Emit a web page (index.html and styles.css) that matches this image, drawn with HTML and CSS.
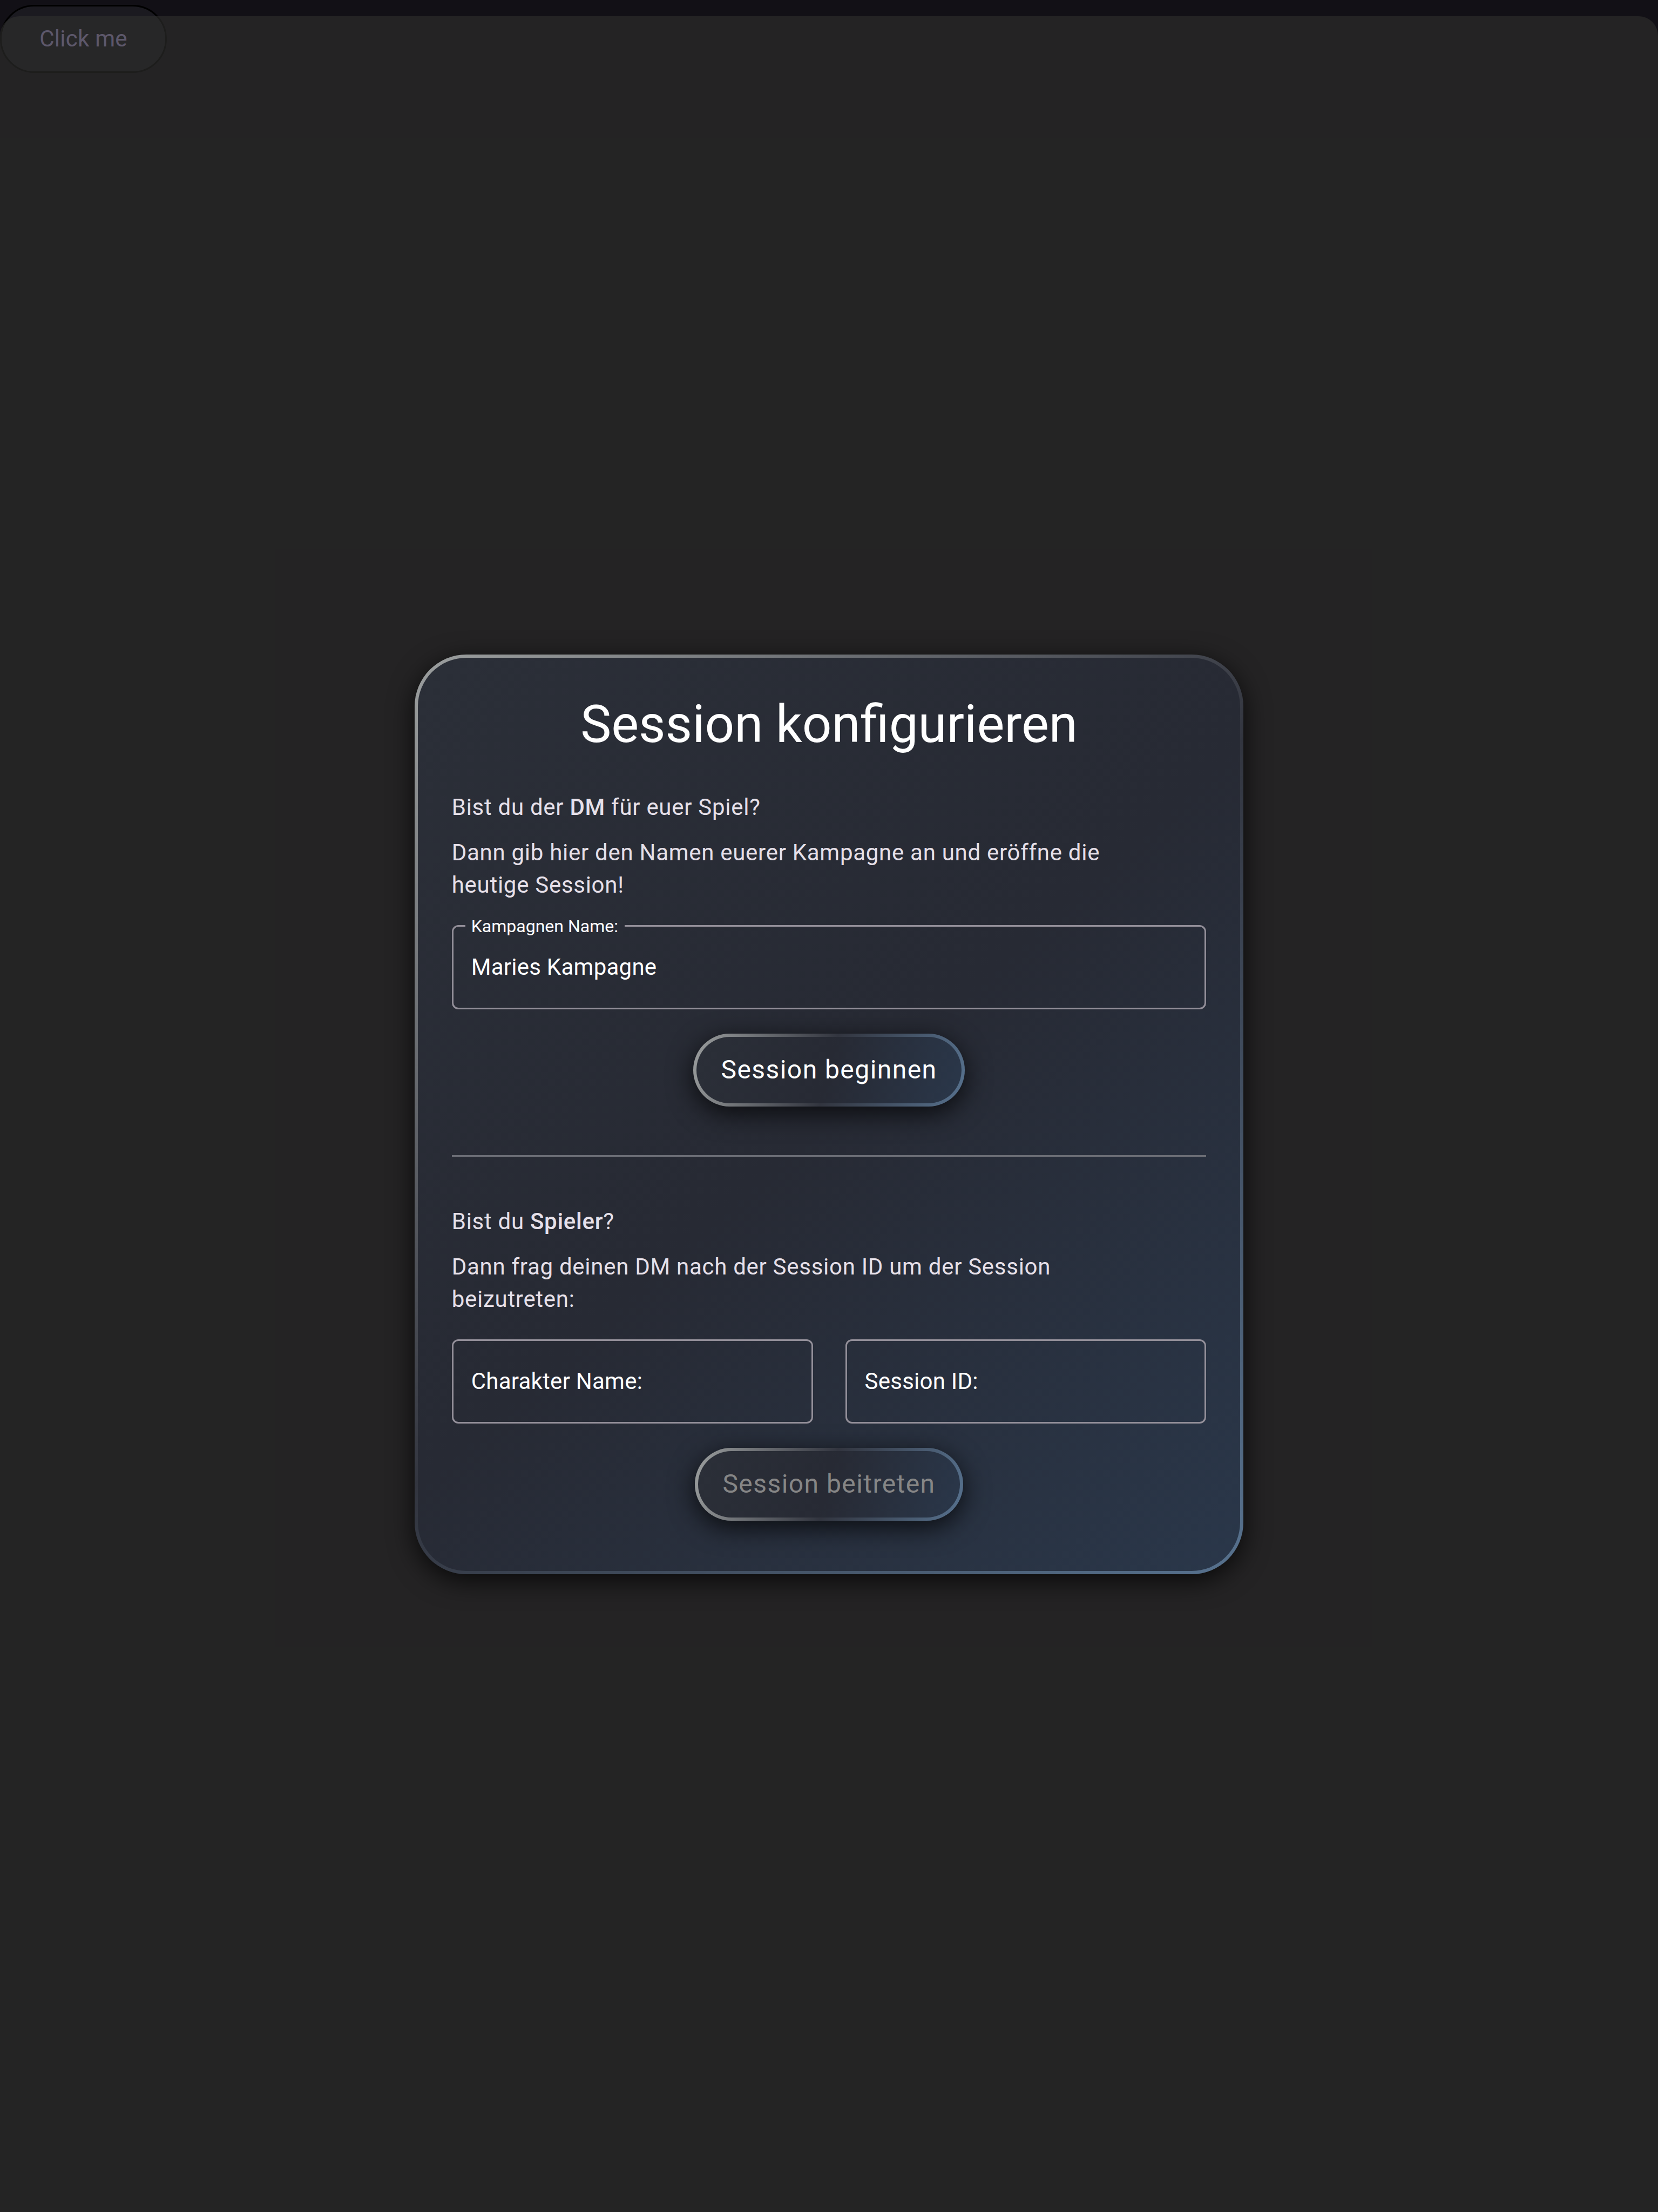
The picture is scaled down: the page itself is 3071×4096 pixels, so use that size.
FILE: index.html
```html
<!DOCTYPE html>
<html lang="de">
<head>
<meta charset="utf-8">
<title>Session konfigurieren</title>
<link rel="stylesheet" href="styles.css">
</head>
<body>
<button class="trigger" type="button">Click me</button>
<div class="overlay">
  <main class="card">
    <h1 class="title">Session konfigurieren</h1>
    <form class="section">
      <div class="intro">
        <p>Bist du der <strong>DM</strong> für euer Spiel?</p>
        <p>Dann gib hier den Namen euerer Kampagne an und eröffne die heutige Session!</p>
      </div>
      <fieldset class="outlined">
        <legend><label for="campaign">Kampagnen Name:</label></legend>
        <input class="outlined-input" id="campaign" type="text" value="Maries Kampagne">
      </fieldset>
      <button class="action" type="button">Session beginnen</button>
    </form>
    <hr class="divider">
    <form class="section">
      <div class="intro">
        <p>Bist du <strong>Spieler</strong>?</p>
        <p>Dann frag deinen DM nach der Session ID um der Session beizutreten:</p>
      </div>
      <div class="fields">
        <div class="field">
          <label for="character">Charakter Name:</label>
          <input id="character" type="text">
        </div>
        <div class="field">
          <label for="session">Session ID:</label>
          <input id="session" type="text">
        </div>
      </div>
      <button class="action" type="button" disabled>Session beitreten</button>
    </form>
  </main>
</div>
</body>
</html>
```
FILE: styles.css
```css
* { box-sizing: border-box; }

body {
  margin: 0;
  min-height: 100vh;
  padding-top: 30px;
  display: flex;
  background: #121016;
  color: #e6e0e9;
  font: 42px/60px Roboto, sans-serif;
}

button, input { font: inherit; letter-spacing: inherit; color: inherit; }

.trigger {
  position: absolute;
  top: 9px;
  left: 0;
  width: 309px;
  height: 126px;
  border: 3px solid #000;
  border-radius: 63px;
  background: #1b1a20;
  color: #a093c6;
  letter-spacing: 0.006em;
}

.overlay {
  position: relative;
  flex: 1;
  display: flex;
  align-items: center;
  justify-content: center;
  border-radius: 36px 36px 0 0;
  background: rgba(48, 49, 46, 0.6);
}

.card {
  width: 50%;
  padding: 63px 63px 93px;
  border: 6px solid transparent;
  border-radius: 96px;
  background:
    linear-gradient(138deg, #2b2f38, #272a34 50%, #2a374a) padding-box,
    linear-gradient(138deg, #9c9f9f, #32353f 50%, #57728f) border-box;
  box-shadow: 0 12px 48px rgba(0, 0, 0, 0.75);
}

.title {
  margin: 0 0 64px;
  color: #fff;
  font-size: 96px;
  font-weight: 400;
  line-height: 120px;
  text-align: center;
}

.section { display: flex; flex-direction: column; }

.intro {
  display: flex;
  flex-direction: column;
  gap: 24px;
  padding-right: 130px;
  letter-spacing: 0.017em;
}

.intro p { margin: 0; }
strong { font-weight: 500; }

.outlined {
  min-width: 0;
  margin: 28px 0 0;
  padding: 0;
  border: 3px solid #938f99;
  border-radius: 12px;
}

.outlined legend {
  margin-left: 22px;
  padding: 0 12px 0 11px;
  color: #fff;
  font-size: 32px;
  line-height: 36px;
}

.outlined-input, .field input, .field label {
  padding: 0 33px;
  color: #fff;
  letter-spacing: 0.006em;
}

.outlined-input, .field input {
  display: block;
  width: 100%;
  height: 150px;
  border: 0;
  outline: 0;
  background: none;
}

.outlined-input { margin-top: -17px; }

.fields {
  display: grid;
  grid-template-columns: 1fr 1fr;
  gap: 60px;
  margin-top: 44px;
}

.field {
  display: grid;
  align-items: center;
  border: 3px solid #938f99;
  border-radius: 12px;
}

.field label, .field input { grid-area: 1 / 1; }

.action {
  align-self: center;
  height: 135px;
  margin-top: 45px;
  padding: 0 45px;
  border: 6px solid transparent;
  border-radius: 68px;
  background:
    linear-gradient(105deg, #2b2f38, #272a34 50%, #2a374a) padding-box,
    linear-gradient(105deg, #9c9f9f, #32353f 50%, #57728f) border-box;
  box-shadow: 0 12px 48px rgba(0, 0, 0, 0.75);
  color: #fff;
  font-size: 48px;
  letter-spacing: 0.03em;
}

.action:disabled { color: #868686; }

.divider {
  height: 3px;
  margin: 90px 0;
  border: 0;
  background: #6c6e76;
}
```
